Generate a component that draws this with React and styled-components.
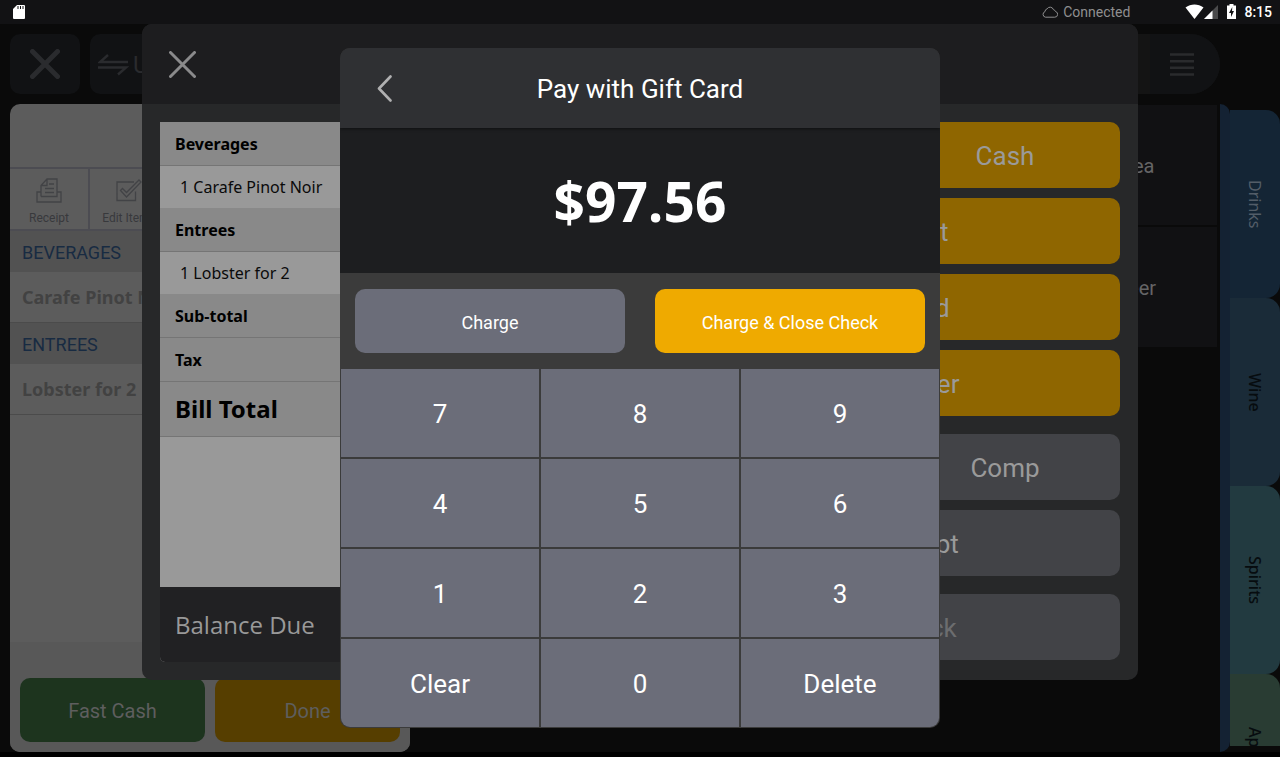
import React from "react";
import styled, { createGlobalStyle, css } from "styled-components";

const GlobalStyle = createGlobalStyle`
  * {
    box-sizing: border-box;
  }
  body {
    margin: 0;
    background: #000;
    font-family: Roboto, "Liberation Sans", sans-serif;
  }
  button {
    border: 0;
    padding: 2px 0 0;
    font: inherit;
    cursor: pointer;
  }
  ul, h1, h2, p {
    list-style: none;
    margin: 0;
    padding: 0;
  }
  svg {
    display: block;
    flex: none;
  }
`;

const noto = css`
  font-family: "Noto Sans", "Open Sans", sans-serif;
`;

const Screen = styled.div`
  position: relative;
  display: flex;
  flex-direction: column;
  min-height: 100vh;
  padding-bottom: 5px;
  overflow: hidden;
`;

/* Status bar */

const StatusBar = styled.header`
  display: flex;
  align-items: center;
  justify-content: space-between;
  height: 24px;
  padding: 0 8px 0 12px;
  background: #121214;
  color: #fff;
  font-size: 14px;
`;

const StatusGroup = styled.div`
  display: flex;
  align-items: center;
`;

const Connection = styled.span`
  display: flex;
  align-items: center;
  gap: 5px;
  margin-right: 55px;
  color: #8f8f90;
`;

const Power = styled.span`
  display: flex;
  align-items: center;
  gap: 8px;
  margin-left: 9px;
  font-weight: 500;
`;

/* Register behind the dialogs */

const Register = styled.main`
  flex: 1;
  display: flex;
  flex-direction: column;
  background: #0a0a0a;
`;

const Toolbar = styled.nav`
  display: flex;
  gap: 10px;
  height: 80px;
  padding: 10px 60px 10px 10px;
`;

const ToolButton = styled.button`
  display: flex;
  align-items: center;
  justify-content: ${p => (p.$wide ? "flex-start" : "center")};
  gap: 4px;
  width: ${p => (p.$wide ? "200px" : "70px")};
  padding: ${p => (p.$wide ? "2px 8px 0" : "0")};
  border-radius: 10px;
  background: #111214;
  color: #2a2b2e;
  font-size: 24px;
`;

const MenuPill = styled.div`
  display: flex;
  justify-content: flex-end;
  width: 200px;
  margin-left: auto;
  border-radius: 30px;
  overflow: hidden;
  background: #141414;
`;

const MenuButton = styled.button`
  display: flex;
  align-items: center;
  width: 70px;
  padding: 0 0 0 20px;
  background: #111214;
`;

const Workspace = styled.div`
  flex: 1;
  display: flex;
`;

const Ticket = styled.section`
  display: flex;
  flex-direction: column;
  width: 400px;
  margin-left: 10px;
  border-radius: 10px;
  overflow: hidden;
  background: #5c5c5c;
`;

const TicketActions = styled.div`
  display: grid;
  grid-template-columns: repeat(5, 1fr);
  height: 64px;
  margin-top: 63px;
  border-top: 2px solid #4c4c52;
  border-bottom: 2px solid #4c4c52;
`;

const TicketAction = styled.button`
  display: flex;
  flex-direction: column;
  align-items: center;
  justify-content: space-between;
  padding: 9px 0 3px;
  border-right: 2px solid #4c4c52;
  background: none;
  color: #38393c;
  font-size: 12px;
  line-height: 16px;
`;

const TicketHeading = styled.h2`
  padding: 2px 12px 0;
  background: #525252;
  color: #182b42;
  font-size: 18px;
  font-weight: 400;
  line-height: 39px;
`;

const TicketItem = styled.p`
  ${noto}
  padding: 0 12px;
  border-bottom: 1px solid #4b4b4b;
  color: #424242;
  font-size: 18px;
  font-weight: 700;
  line-height: 50px;
`;

const TicketFooter = styled.div`
  display: flex;
  align-items: flex-end;
  gap: 10px;
  height: 110px;
  margin-top: auto;
  padding: 10px;
  background: #585858;
`;

const TicketButton = styled.button`
  flex: 1;
  height: 64px;
  border-radius: 10px;
  background: ${p => p.$color};
  color: #5e5e5e;
  font-size: 20px;
`;

const Tiles = styled.div`
  flex: 1;
  display: flex;
  flex-direction: column;
  align-items: flex-end;
  gap: 2px;
  padding: 1px 3px 0 0;
`;

const Tile = styled.button`
  width: 200px;
  height: 120px;
  background: #111113;
  color: #656566;
  font-size: 20px;
`;

const Rail = styled.div`
  width: 10px;
  border-radius: 0 10px 10px 0;
  background: #142233;
`;

const Tabs = styled.nav`
  width: 50px;
  height: 636px;
  margin: 6px 0;
  overflow: hidden;
`;

const Tab = styled.button`
  ${noto}
  display: block;
  width: 50px;
  height: 188px;
  padding: 0;
  border-radius: 0 14px 14px 0;
  background: ${p => p.$color};
  color: ${p => (p.$active ? "#535d68" : "#070c0f")};
  font-size: 16px;
  font-weight: ${p => (p.$active ? 400 : 500)};
  writing-mode: vertical-rl;
`;

/* Dialogs */

const Overlay = styled.div`
  position: absolute;
  inset: 24px 0 0;
  display: flex;
  justify-content: center;
  align-items: flex-start;
`;

const PayDialog = styled.section`
  width: 996px;
  border-radius: 10px;
  overflow: hidden;
  background: #272829;
`;

const PayHeader = styled.header`
  display: flex;
  align-items: center;
  height: 80px;
  padding: 0 27px;
  background: #1d1d1f;
`;

const IconButton = styled.button`
  display: flex;
  padding: 0;
  background: none;
`;

const PayBody = styled.div`
  display: flex;
  gap: 18px;
  padding: 18px;
`;

const Receipt = styled.div`
  ${noto}
  flex: 1;
  display: flex;
  flex-direction: column;
  min-height: 540px;
  border-radius: 0 0 5px 5px;
  overflow: hidden;
  background: #999;
  color: #000;
`;

const ReceiptRow = styled.li`
  padding: ${p => (p.$total ? "0 15px" : "2px 15px 0")};
  border-bottom: 1px solid #757575;
  background: #898989;
  font-size: ${p => (p.$total ? "24px" : "16px")};
  font-weight: 700;
  line-height: ${p => (p.$total ? "54px" : "41px")};
`;

const ReceiptItem = styled.li`
  padding: 0 20px;
  color: #0a0a0a;
  font-size: 16px;
  line-height: 42px;
`;

const Balance = styled.p`
  margin-top: auto;
  padding: 0 15px;
  background: #212123;
  color: #999;
  font-family: "Open Sans", sans-serif;
  font-size: 24px;
  line-height: 75px;
`;

const Tenders = styled.div`
  display: flex;
  flex-direction: column;
  gap: 18px;
  width: 470px;
`;

const TenderGroup = styled.div`
  display: grid;
  grid-template-columns: 1fr 1fr;
  gap: 10px;
`;

const TenderButton = styled.button`
  grid-column: ${p => (p.$half ? "auto" : "span 2")};
  height: 66px;
  border-radius: 10px;
  background: ${p => (p.$gold ? "#8f6600" : "#424347")};
  color: #9a9a9a;
  font-size: 26px;

  &:disabled {
    color: #6c6d6f;
  }
`;

const GiftOverlay = styled(Overlay)`
  padding-top: 24px;
`;

const GiftDialog = styled.section`
  width: 600px;
  border-radius: 10px;
  overflow: hidden;
  background: #3b3b3b;
  color: #fff;
`;

const GiftHeader = styled.header`
  position: relative;
  display: grid;
  grid-template-columns: 60px 1fr 60px;
  align-items: center;
  height: 80px;
  padding: 0 36px;
  background: #2f3033;
  box-shadow: 0 1px 3px rgba(0, 0, 0, 0.5);
`;

const GiftTitle = styled.h1`
  padding-top: 2px;
  font-size: 26px;
  font-weight: 400;
  text-align: center;
`;

const Amount = styled.p`
  background: #1d1e20;
  font-family: "Open Sans", sans-serif;
  font-size: 55px;
  font-weight: 700;
  line-height: 145px;
  text-align: center;
`;

const GiftActions = styled.div`
  display: grid;
  grid-template-columns: 1fr 1fr;
  gap: 30px;
  padding: 16px 15px;
`;

const ChargeButton = styled.button`
  height: 64px;
  border-radius: 10px;
  background: ${p => (p.$primary ? "#efaa00" : "#6b6d79")};
  color: #fff;
  font-size: 18px;
`;

const Keypad = styled.div`
  display: grid;
  grid-template-columns: repeat(3, 1fr);
  grid-auto-rows: 88px;
  gap: 2px;
  padding: 0 1px 1px;
`;

const Key = styled.button`
  background: #6b6d79;
  color: #fff;
  font-size: 26px;

  &:nth-last-child(3) {
    border-bottom-left-radius: 9px;
  }
  &:last-child {
    border-bottom-right-radius: 9px;
  }
`;

const SdCardIcon = () => (
  <svg width="14" height="16" viewBox="0 0 14 16">
    <path
      fill="#fff"
      d="M5 1h7a1 1 0 0 1 1 1v12a1 1 0 0 1-1 1H2a1 1 0 0 1-1-1V5z"
    />
    <path stroke="#121214" d="M6 2v3M8.500 2v3M11 2v3" />
  </svg>
);

const CloudIcon = () => (
  <svg width="16" height="12" viewBox="0 0 16 12" fill="none">
    <path
      stroke="#8f8f90"
      d="M3.500 11.200a2.900 2.900 0 0 1-.5-5.600 3 3 0 0 1 2.100-2.800 3.500 3.500 0 0 1 6.300.8 3 3 0 0 1 2.100 1.900 2.900 2.900 0 0 1-.8 5.700z"
    />
  </svg>
);

const WifiIcon = () => (
  <svg width="19" height="16" viewBox="0 0 19 16">
    <path fill="#fff" d="M9.500 15 .5 3.600C5.800-.4 13.200-.4 18.500 3.600z" />
  </svg>
);

const SignalIcon = () => (
  <svg width="14" height="14" viewBox="0 0 14 14">
    <path fill="#4b4b4c" d="M14 0v14H0z" />
    <path fill="#fff" d="M8.500 5.500V14H0z" />
  </svg>
);

const BatteryIcon = () => (
  <svg width="9" height="17" viewBox="0 0 9 17">
    <path fill="#fff" d="M2.500 0h4v1.500H9V15H0V1.500h2.500z" />
    <path fill="#121214" d="M5.300 3 2 9h2v4l3-6H5z" />
  </svg>
);

const CrossIcon = ({ size, color, weight }) => {
  const near = weight / 2;
  const far = size - near;
  return (
    <svg width={size} height={size} viewBox={`0 0 ${size} ${size}`}>
      <path
        stroke={color}
        strokeWidth={weight}
        strokeLinecap="round"
        d={`M${near} ${near} ${far} ${far}M${far} ${near} ${near} ${far}`}
      />
    </svg>
  );
};

const SwapIcon = () => (
  <svg width="31" height="22" viewBox="0 0 31 22" fill="none">
    <path
      stroke="#2a2b2e"
      strokeWidth="2.400"
      d="M30 8H2L10 1M0 13.500h28l-8 7"
    />
  </svg>
);

const MenuIcon = () => (
  <svg width="24" height="24" viewBox="0 0 24 24">
    <path
      stroke="#2a2b2d"
      strokeWidth="2.600"
      d="M0 2.500h24M0 9.200h24M0 15.800h24M0 22.500h24"
    />
  </svg>
);

const ReceiptIcon = () => (
  <svg width="26" height="26" viewBox="0 0 26 26" fill="none">
    <path
      stroke="#424346"
      strokeWidth="1.300"
      d="M5 14H1v10h24V14h-4M5 18.500V7.500L11 1h10v17.500H5M5.500 7.500H11V1M13 6h5M9 10.500h9M9 14.500h9"
    />
  </svg>
);

const EditIcon = () => (
  <svg width="26" height="26" viewBox="0 0 26 26" fill="none">
    <path
      stroke="#424346"
      strokeWidth="1.300"
      d="M18 4H1v18.500h18.500v-9M4.500 12.500l2-2 4 4L23 2l2 2-14.500 15z"
    />
  </svg>
);

const BackIcon = () => (
  <svg width="16" height="28" viewBox="0 0 16 28" fill="none">
    <path
      stroke="#b0b0b1"
      strokeWidth="2.600"
      strokeLinecap="round"
      strokeLinejoin="round"
      d="M14.500 2.500 3 14.500l11.500 12"
    />
  </svg>
);

const tabs = [
  { name: "Drinks", color: "#142535", active: true },
  { name: "Wine", color: "#1a2b38" },
  { name: "Spirits", color: "#223a40" },
  { name: "Appetizers", color: "#293c33" }
];

const keys = ["7", "8", "9", "4", "5", "6", "1", "2", "3", "Clear", "0", "Delete"];

const App = () => (
  <Screen>
    <GlobalStyle />
    <StatusBar>
      <SdCardIcon />
      <StatusGroup>
        <Connection>
          <CloudIcon />
          Connected
        </Connection>
        <WifiIcon />
        <SignalIcon />
        <Power>
          <BatteryIcon />
          8:15
        </Power>
      </StatusGroup>
    </StatusBar>

    <Register>
      <Toolbar>
        <ToolButton aria-label="Close">
          <CrossIcon size={30} color="#2a2b2e" weight={5} />
        </ToolButton>
        <ToolButton $wide>
          <SwapIcon />U
        </ToolButton>
        <MenuPill>
          <MenuButton aria-label="Menu">
            <MenuIcon />
          </MenuButton>
        </MenuPill>
      </Toolbar>
      <Workspace>
        <Ticket>
          <TicketActions>
            <TicketAction>
              <ReceiptIcon />
              Receipt
            </TicketAction>
            <TicketAction>
              <EditIcon />
              Edit Items
            </TicketAction>
          </TicketActions>
          <TicketHeading>BEVERAGES</TicketHeading>
          <TicketItem>Carafe Pinot Noir</TicketItem>
          <TicketHeading>ENTREES</TicketHeading>
          <TicketItem>Lobster for 2</TicketItem>
          <TicketFooter>
            <TicketButton $color="#1d341e">Fast Cash</TicketButton>
            <TicketButton $color="#563e00">Done</TicketButton>
          </TicketFooter>
        </Ticket>
        <Tiles>
          <Tile>Iced Tea</Tile>
          <Tile>Lite Beer</Tile>
        </Tiles>
        <Rail />
        <Tabs>
          {tabs.map(tab => (
            <Tab key={tab.name} $color={tab.color} $active={tab.active}>
              {tab.name}
            </Tab>
          ))}
        </Tabs>
      </Workspace>
    </Register>

    <Overlay>
      <PayDialog>
        <PayHeader>
          <IconButton aria-label="Close payment">
            <CrossIcon size={27} color="#8a8a8b" weight={3} />
          </IconButton>
        </PayHeader>
        <PayBody>
          <Receipt>
            <ul>
              <ReceiptRow>Beverages</ReceiptRow>
              <ReceiptItem>1 Carafe Pinot Noir</ReceiptItem>
              <ReceiptRow>Entrees</ReceiptRow>
              <ReceiptItem>1 Lobster for 2</ReceiptItem>
              <ReceiptRow>Sub-total</ReceiptRow>
              <ReceiptRow>Tax</ReceiptRow>
              <ReceiptRow $total>Bill Total</ReceiptRow>
            </ul>
            <Balance>Balance Due</Balance>
          </Receipt>
          <Tenders>
            <TenderGroup>
              <TenderButton $gold $half>
                Exact
              </TenderButton>
              <TenderButton $gold $half>
                Cash
              </TenderButton>
              <TenderButton $gold>Guest Acct</TenderButton>
              <TenderButton $gold>Credit Card</TenderButton>
              <TenderButton $gold>Other Tender</TenderButton>
            </TenderGroup>
            <TenderGroup>
              <TenderButton $half>Void</TenderButton>
              <TenderButton $half>Comp</TenderButton>
              <TenderButton>Print Receipt</TenderButton>
            </TenderGroup>
            <TenderGroup>
              <TenderButton disabled>Close Check</TenderButton>
            </TenderGroup>
          </Tenders>
        </PayBody>
      </PayDialog>
    </Overlay>

    <GiftOverlay>
      <GiftDialog role="dialog" aria-labelledby="gift-title">
        <GiftHeader>
          <IconButton aria-label="Back">
            <BackIcon />
          </IconButton>
          <GiftTitle id="gift-title">Pay with Gift Card</GiftTitle>
        </GiftHeader>
        <Amount>$97.56</Amount>
        <GiftActions>
          <ChargeButton>Charge</ChargeButton>
          <ChargeButton $primary>Charge &amp; Close Check</ChargeButton>
        </GiftActions>
        <Keypad>
          {keys.map(key => (
            <Key key={key}>{key}</Key>
          ))}
        </Keypad>
      </GiftDialog>
    </GiftOverlay>
  </Screen>
);

export default App;
